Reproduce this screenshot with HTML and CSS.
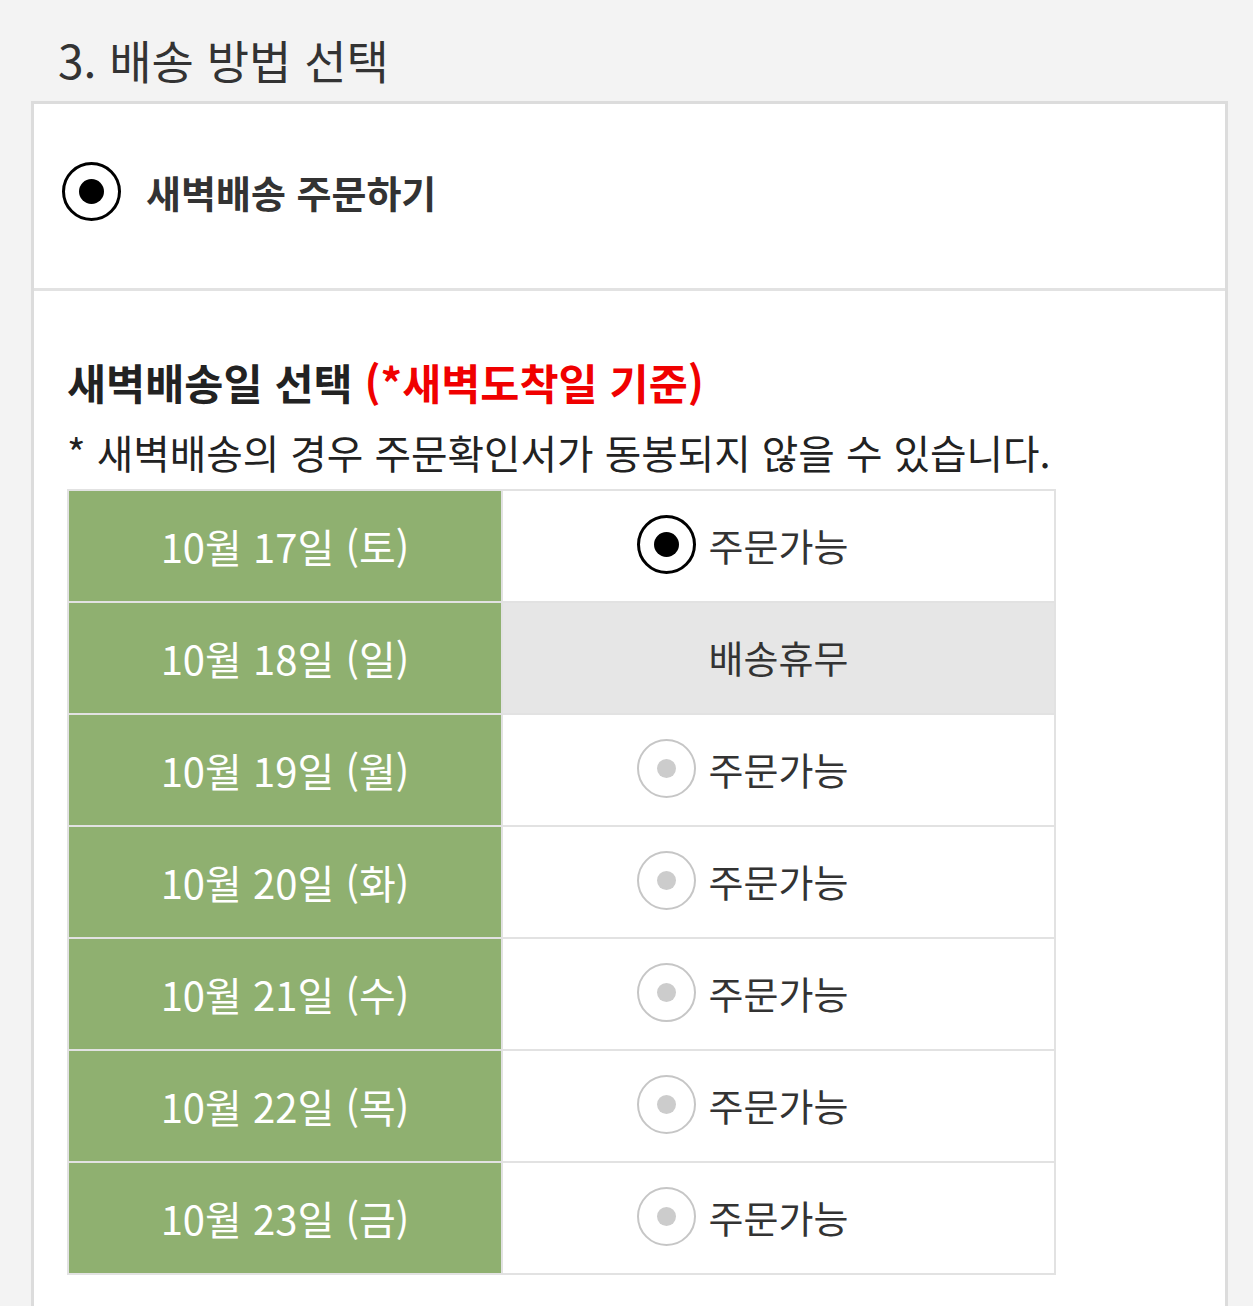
FILE: index.html
```html
<!DOCTYPE html>
<html lang="ko">
<head>
<meta charset="utf-8">
<link rel="stylesheet" href="styles.css">
</head>
<body>
<h2 class="title">3. 배송 방법 선택</h2>
<div class="card">
  <div class="method">
    <span class="radio on"></span>
    <span class="method-label">새벽배송 주문하기</span>
  </div>
  <div class="dates">
    <h3 class="dates-head">새벽배송일 선택 <span class="red">(*새벽도착일 기준)</span></h3>
    <p class="note">* 새벽배송의 경우 주문확인서가 동봉되지 않을 수 있습니다.</p>
    <table class="date-table">
      <tr><td class="day">10월 17일 (토)</td><td class="opt"><div class="opt-in"><span class="radio on"></span><span class="opt-text">주문가능</span></div></td></tr>
      <tr><td class="day">10월 18일 (일)</td><td class="opt off"><div class="opt-in"><span></span><span class="opt-text">배송휴무</span></div></td></tr>
      <tr><td class="day">10월 19일 (월)</td><td class="opt"><div class="opt-in"><span class="radio"></span><span class="opt-text">주문가능</span></div></td></tr>
      <tr><td class="day">10월 20일 (화)</td><td class="opt"><div class="opt-in"><span class="radio"></span><span class="opt-text">주문가능</span></div></td></tr>
      <tr><td class="day">10월 21일 (수)</td><td class="opt"><div class="opt-in"><span class="radio"></span><span class="opt-text">주문가능</span></div></td></tr>
      <tr><td class="day">10월 22일 (목)</td><td class="opt"><div class="opt-in"><span class="radio"></span><span class="opt-text">주문가능</span></div></td></tr>
      <tr><td class="day">10월 23일 (금)</td><td class="opt"><div class="opt-in"><span class="radio"></span><span class="opt-text">주문가능</span></div></td></tr>
    </table>
  </div>
</div>
</body>
</html>
```
FILE: styles.css
```css
html, body {
  margin: 0;
  padding: 0;
  background: #f3f3f3;
  font-family: "Noto Sans CJK KR", "Noto Sans", sans-serif;
  color: #333;
}
body {
  padding: 0 25px 0 31px;
  height: 1306px;
  overflow: hidden;
}
.title {
  margin: 0;
  padding: 16px 0 0 27px;
  height: 85px;
  font-size: 46px;
  font-weight: 400;
  color: #333;
  display: flex;
  align-items: center;
}
.card {
  background: #fff;
  border: 3px solid #dcdcdc;
  border-bottom: none;
  height: 1300px;
}
.method {
  box-sizing: border-box;
  height: 187px;
  padding: 0 0 10px 28px;
  border-bottom: 3px solid #e2e2e2;
  display: flex;
  align-items: center;
  gap: 25px;
}
.method-label {
  font-size: 38px;
  font-weight: 700;
  color: #333;
}
.radio {
  box-sizing: border-box;
  width: 59px;
  height: 59px;
  border-radius: 50%;
  border: 2.5px solid #c6c6c6;
  display: flex;
  align-items: center;
  justify-content: center;
  flex: none;
}
.radio::after {
  content: "";
  width: 19px;
  height: 19px;
  border-radius: 50%;
  background: #cccccc;
}
.radio.on {
  border: 3px solid #000;
}
.radio.on::after {
  width: 25px;
  height: 25px;
  background: #000;
}
.dates {
  padding: 63px 0 0 33px;
}
.dates-head {
  margin: 0;
  font-size: 42.5px;
  font-weight: 700;
  color: #222;
  line-height: 56px;
}
.red {
  color: #f00000;
}
.note {
  margin: 14px 0 0 0;
  font-size: 39.7px;
  line-height: 56px;
  color: #222;
}
.date-table {
  margin-top: 9px;
  border-collapse: collapse;
  width: 989px;
  border: 2px solid #dedede;
}
.date-table td {
  border: 2px solid #e2e2e2;
  height: 110px;
  padding: 0;
  font-size: 38px;
}
.day {
  width: 432px;
  background: #8fb070;
  color: #fff;
  text-align: center;
}
.date-table td.day {
  font-size: 40px;
}
.opt {
  background: #fff;
  color: #333;
}
.opt.off {
  background: #e6e6e6;
}
.opt-in {
  display: grid;
  grid-template-columns: 1fr auto 1fr;
  align-items: center;
  column-gap: 13px;
  padding-bottom: 3px;
}
.opt-in .radio {
  justify-self: end;
  grid-column: 1;
}
.opt-text {
  grid-column: 2;
}
```
